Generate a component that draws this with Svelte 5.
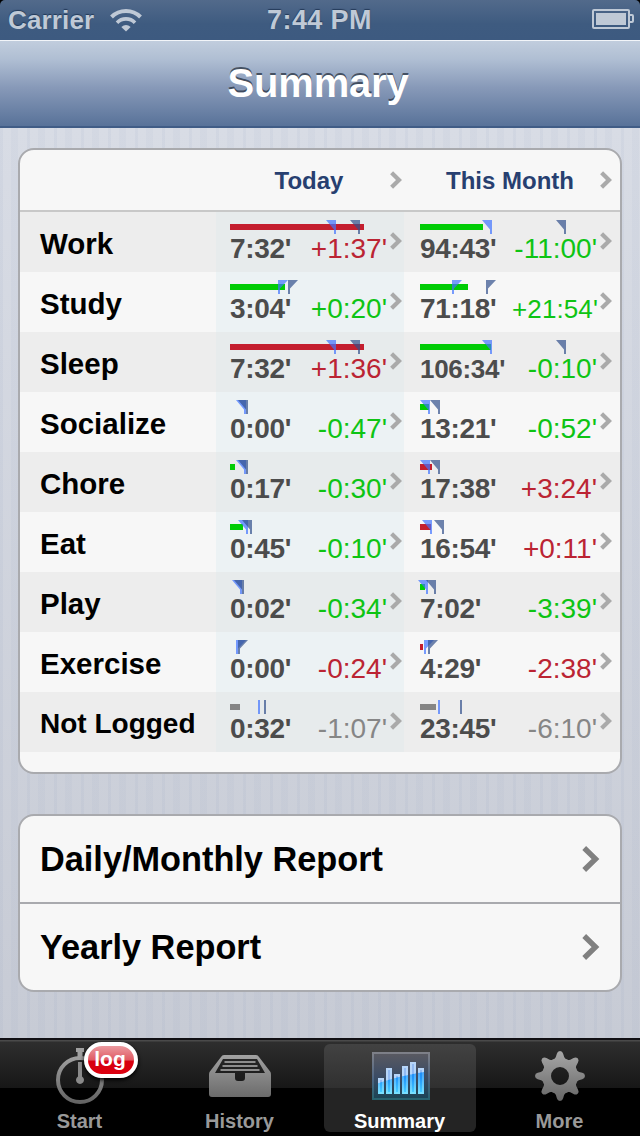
<script lang="ts">
	type Tone = 'good' | 'bad' | 'none';
	type Flag = 'left' | 'right' | 'pole';
	type Cell = {
		time: string;
		diff: string;
		tone: Tone;
		bar: number;
		flag: Flag;
		// x of the two goal markers, from the start of the bar
		marks: [number, number];
	};

	const cell = (
		time: string,
		diff: string,
		tone: Tone,
		bar: number,
		flag: Flag,
		marks: [number, number]
	): Cell => ({ time, diff, tone, bar, flag, marks });

	const rows: { name: string; cells: Cell[] }[] = [
		{
			name: 'Work',
			cells: [
				cell("7:32'", "+1:37'", 'bad', 134, 'left', [106, 130]),
				cell("94:43'", "-11:00'", 'good', 63, 'left', [72, 146])
			]
		},
		{
			name: 'Study',
			cells: [
				cell("3:04'", "+0:20'", 'good', 55, 'right', [48, 58]),
				cell("71:18'", "+21:54'", 'good', 48, 'right', [32, 66])
			]
		},
		{
			name: 'Sleep',
			cells: [
				cell("7:32'", "+1:36'", 'bad', 134, 'left', [106, 130]),
				cell("106:34'", "-0:10'", 'good', 71, 'left', [72, 146])
			]
		},
		{
			name: 'Socialize',
			cells: [
				cell("0:00'", "-0:47'", 'good', 0, 'left', [16, 18]),
				cell("13:21'", "-0:52'", 'good', 9, 'left', [10, 20])
			]
		},
		{
			name: 'Chore',
			cells: [
				cell("0:17'", "-0:30'", 'good', 5, 'left', [16, 18]),
				cell("17:38'", "+3:24'", 'bad', 12, 'left', [10, 20])
			]
		},
		{
			name: 'Eat',
			cells: [
				cell("0:45'", "-0:10'", 'good', 13, 'left', [18, 22]),
				cell("16:54'", "+0:11'", 'bad', 11, 'left', [12, 24])
			]
		},
		{
			name: 'Play',
			cells: [
				cell("0:02'", "-0:34'", 'good', 0, 'left', [12, 14]),
				cell("7:02'", "-3:39'", 'good', 5, 'left', [8, 16])
			]
		},
		{
			name: 'Exercise',
			cells: [
				cell("0:00'", "-0:24'", 'bad', 0, 'right', [6, 8]),
				cell("4:29'", "-2:38'", 'bad', 3, 'right', [4, 8])
			]
		},
		{
			name: 'Not Logged',
			cells: [
				cell("0:32'", "-1:07'", 'none', 10, 'pole', [28, 34]),
				cell("23:45'", "-6:10'", 'none', 16, 'pole', [18, 40])
			]
		}
	];

	const reports = ['Daily/Monthly Report', 'Yearly Report'];
	const tabs = ['Start', 'History', 'Summary', 'More'];
	let active = $state('Summary');

	const chart = [
		[6, 26],
		[14, 16],
		[22, 22],
		[30, 14],
		[38, 10],
		[46, 16]
	];

	function flagPath(flag: Flag, x: number) {
		if (flag === 'left') return `M${x - 10} 0H${x}V14H${x - 2}V9.5Z`;
		if (flag === 'right') return `M${x} 0H${x + 10}L${x + 2} 8.5V14H${x}Z`;
		return `M${x} 0h2v14h-2Z`;
	}

	// eight tapered teeth around the gear's ring
	const teeth = Array.from({ length: 8 }, (_, i) => {
		const a = (i * Math.PI) / 4;
		const at = (r: number, d: number) =>
			`${(30 + r * Math.sin(a + d)).toFixed(2)} ${(32 - r * Math.cos(a + d)).toFixed(2)}`;
		return `M${at(17, -0.38)}Q${at(19, -0.2)} ${at(22.5, -0.14)}Q${at(25, -0.1)} ${at(25, 0)}Q${at(25, 0.1)} ${at(22.5, 0.14)}Q${at(19, 0.2)} ${at(17, 0.38)}Z`;
	}).join('');
</script>

{#snippet chevron()}
	<svg class="chevron" width="12" height="18" viewBox="0 0 12 18">
		<path d="M1.6 1.8L9 9L1.6 16.2" fill="none" stroke="currentColor" stroke-width="4.2" />
	</svg>
{/snippet}

<div class="screen">
	<header class="status">
		<div class="status__side">
			<span class="status__carrier">Carrier</span>
			<svg width="32" height="24" viewBox="0 0 32 24" fill="none" stroke="currentColor" stroke-width="4">
				<path d="M1.5 9A20.5 20.5 0 0 1 30.5 9" />
				<path d="M7 14.7A12.6 12.6 0 0 1 25 14.7" stroke-width="3.6" />
				<path d="M11.3 19.1Q16 14.7 20.7 19.1L16 23.6Z" fill="currentColor" stroke="none" />
			</svg>
		</div>
		<span class="status__time">7:44 PM</span>
		<div class="status__side status__side--end">
			<svg width="42" height="20" viewBox="0 0 42 20">
				<rect x="1" y="1" width="36" height="18" rx="1" fill="none" stroke="currentColor" stroke-width="2" />
				<rect x="4" y="4" width="30" height="12" fill="currentColor" />
				<path d="M38 6H40Q41 6 41 7V12Q41 13 40 13H38" fill="none" stroke="currentColor" stroke-width="2" />
			</svg>
		</div>
	</header>

	<nav class="navbar"><h1>Summary</h1></nav>

	<main>
		<section class="card">
			<div class="row row--head">
				<span></span>
				<div class="head"><span>Today</span>{@render chevron()}</div>
				<div class="head head--month"><span>This Month</span>{@render chevron()}</div>
			</div>
			{#each rows as row}
				<div class="row">
					<span class="row__name" class:row__name--long={row.name.length > 9}>{row.name}</span>
					{#each row.cells as c, i}
						<div class="cell" class:cell--today={i === 0} class:cell--month={i === 1}>
							<div class="cell__body">
								<svg class="gauge" width="150" height="14">
									<rect class="bar bar--{c.tone}" y="4" width={c.bar} height="6" />
									<path class="mark" d={flagPath(c.flag, c.marks[0])} />
									<path class="mark mark--goal" d={flagPath(c.flag, c.marks[1])} />
								</svg>
								<div class="figures">
									<b class:small={c.time.length > 6}>{c.time}</b>
									<span class="diff diff--{c.tone}" class:small={c.diff === "+21:54'"}>{c.diff}</span>
								</div>
							</div>
							{@render chevron()}
						</div>
					{/each}
				</div>
			{/each}
		</section>

		<section class="card card--reports">
			{#each reports as report}
				<div class="report">
					<span>{report}</span>
					<svg width="18" height="28" viewBox="0 0 18 28">
						<path d="M2.2 3L13.5 14L2.2 25" fill="none" stroke="currentColor" stroke-width="5.4" />
					</svg>
				</div>
			{/each}
		</section>
	</main>

	<footer class="tabs">
		{#each tabs as tab}
			<button type="button" class="tab" class:tab--active={active === tab} onclick={() => (active = tab)}>
				{#if tab === 'Start'}
					<svg width="60" height="64" viewBox="0 0 60 64">
						<defs>
							<linearGradient id="metal" x1="0" y1="6" x2="0" y2="60" gradientUnits="userSpaceOnUse">
								<stop offset="0" stop-color="#a8a8a8" />
								<stop offset="1" stop-color="#626262" />
							</linearGradient>
						</defs>
						<circle cx="30" cy="36" r="22" fill="none" stroke="url(#metal)" stroke-width="4" />
						<path d="M26 4H34V8H32.5V13H27.5V8H26Z" fill="#a0a0a0" />
						<path d="M28 18H32V32.5A4 4 0 1 1 28 32.5Z" fill="#8a8a8a" />
					</svg>
					<span class="badge">log</span>
				{:else if tab === 'History'}
					<svg width="64" height="64" viewBox="0 0 64 64">
						<path
							fill="url(#metal)"
							fill-rule="evenodd"
							d="M16 11H48Q50 11 51 13L62.5 28Q63 29 63 31V50Q63 53 60 53H4Q1 53 1 50V31Q1 29 1.5 28L13 13Q14 11 16 11ZM15 15L7 29H27V34Q27 37 30 37H34Q37 37 37 34V29H57L49 15Z"
						/>
						<path d="M16.500 18H47.500M14.500 22H49.500M12.500 26H51.500" stroke="#8d8d8d" stroke-width="2" />
					</svg>
				{:else if tab === 'Summary'}
					<svg width="62" height="64" viewBox="-1 0 62 64">
						<defs>
							<linearGradient id="frame" x1="0" y1="0" x2="0" y2="1">
								<stop offset="0" stop-color="#7e8088" />
								<stop offset=".55" stop-color="#4d6482" />
								<stop offset="1" stop-color="#28636f" />
							</linearGradient>
							<linearGradient id="panel" x1="0" y1="0" x2="0" y2="1">
								<stop offset="0" stop-color="#5a5a61" />
								<stop offset=".5" stop-color="#3c4c65" />
								<stop offset="1" stop-color="#1b4455" />
							</linearGradient>
							<linearGradient id="blue" x1="0" y1="18" x2="0" y2="50" gradientUnits="userSpaceOnUse">
								<stop offset="0" stop-color="#1b80f5" />
								<stop offset=".5" stop-color="#2295fa" />
								<stop offset="1" stop-color="#48d2ff" />
							</linearGradient>
							<linearGradient id="edge" x1="0" y1="26" x2="0" y2="50" gradientUnits="userSpaceOnUse">
								<stop offset="0" stop-color="#3d9dfb" />
								<stop offset="1" stop-color="#7ae2ff" />
							</linearGradient>
							<clipPath id="gloss"><path d="M0 0H60V27Q30 31 0 42Z" /></clipPath>
						</defs>
						<rect x="3" y="9" width="56" height="46" fill="url(#panel)" stroke="url(#frame)" stroke-width="2" />
						{#each chart as [x, y]}
							<rect x={x + 3} y={y + 9} width="4" height={40 - y} fill="url(#blue)" stroke="url(#edge)" stroke-width="2" />
						{/each}
						<g clip-path="url(#gloss)">
							{#each chart as [x, y]}
								<rect x={x + 3} y={y + 9} width="4" height={40 - y} fill="#91b9f2" stroke="#b6d5f9" stroke-width="2" />
							{/each}
						</g>
					</svg>
				{:else}
					<svg width="60" height="64" viewBox="0 0 60 64">
						<circle cx="30" cy="32" r="13.5" fill="none" stroke="url(#metal)" stroke-width="9" />
						<path d={teeth} fill="url(#metal)" />
					</svg>
				{/if}
				<span class="tab__label">{tab}</span>
			</button>
		{/each}
	</footer>
</div>

<style>
	:global(body) {
		background: #000;
	}

	.screen {
		width: 640px;
		height: 1136px;
		display: flex;
		flex-direction: column;
		overflow: hidden;
		border-radius: 5px 5px 0 0;
		font-family: 'Liberation Sans', Arial, Helvetica, sans-serif;
	}

	.status {
		box-sizing: border-box;
		height: 40px;
		padding: 0 6px 0 8px;
		display: flex;
		align-items: center;
		color: #bfc9d6;
		font-weight: bold;
		background: linear-gradient(#526a8b, #3e5b80 60%, #3d5a80);
		text-shadow: 0 -1px 1px rgba(20, 40, 70, 0.7);
	}

	.status__side {
		flex: 1;
		display: flex;
		align-items: center;
		gap: 16px;
	}

	.status__side--end {
		justify-content: flex-end;
	}

	.status__side--end svg {
		margin-top: -2px;
	}

	.status__carrier {
		font-size: 26px;
		letter-spacing: 0.15px;
	}

	.status__time {
		margin-right: 3px;
		font-size: 27px;
		letter-spacing: 0.4px;
	}

	.navbar {
		box-sizing: border-box;
		height: 88px;
		display: flex;
		align-items: center;
		justify-content: center;
		border-top: 1px solid #f2f5f9;
		border-bottom: 2px solid #405c86;
		background: linear-gradient(#c1cddd, #afbed3 22%, #8799b8 55%, #587299);
	}

	h1 {
		margin: 0 4px 0 0;
		font-size: 40px;
		letter-spacing: -0.2px;
		color: #fff;
		text-shadow: 0 -2px 0 rgba(40, 50, 65, 0.75);
	}

	main {
		flex: 1;
		padding: 20px 18px 0;
		display: flex;
		flex-direction: column;
		gap: 40px;
		background:
			repeating-linear-gradient(90deg, rgba(120, 140, 180, 0.07) 0 3px, transparent 3px 11px, rgba(120, 140, 180, 0.05) 11px 18px, transparent 18px 27px),
			linear-gradient(#d8dce5, #c7cbd5);
	}

	.card {
		border: 2px solid #a9aaae;
		border-radius: 16px;
		background: #f7f7f7;
		overflow: hidden;
		padding-bottom: 20px;
	}

	.card--reports {
		padding-bottom: 0;
	}

	.row {
		height: 60px;
		display: grid;
		grid-template: 60px / 196px 188px 216px;
	}

	.row--head {
		border-bottom: 2px solid #c8c8c8;
	}

	.row:nth-child(even) {
		background: #ededed;
	}

	.row__name {
		padding: 4px 0 0 20px;
		font-size: 29.5px;
		line-height: 56px;
		font-weight: bold;
		white-space: nowrap;
	}

	.row__name--long {
		font-size: 28px;
	}

	.head {
		display: flex;
		align-items: center;
		padding-right: 2px;
		color: #273f70;
		font-size: 24px;
		font-weight: bold;
	}

	.head span {
		flex: 1;
		text-align: center;
		padding: 2px 0 0 12px;
	}

	.head--month {
		padding-right: 8px;
	}

	.head--month span {
		padding-left: 16px;
	}

	.chevron {
		flex-shrink: 0;
		color: #aaa;
	}

	.cell {
		display: flex;
		align-items: flex-start;
		padding: 0 2px 0 14px;
	}

	.cell--today {
		background: #ecf2f4;
	}

	.row:nth-child(even) .cell--today {
		background: #e7ebec;
	}

	.cell--month {
		padding: 0 8px 0 16px;
	}

	.cell .chevron {
		margin-top: 20px;
	}

	.cell__body {
		flex: 1;
		padding: 8px 3px 0 0;
	}

	.gauge {
		display: block;
		overflow: visible;
	}

	.bar--good { fill: #00cc05; }
	.bar--bad { fill: #c41e2e; }
	.bar--none { fill: #858585; }

	.mark {
		fill: rgba(64, 116, 255, 0.7);
	}

	.mark--goal {
		fill: rgba(50, 80, 140, 0.7);
	}

	.figures {
		display: flex;
		justify-content: space-between;
		align-items: baseline;
		font-size: 28px;
		line-height: 29px;
		white-space: nowrap;
	}

	.figures b {
		color: #4c4c4c;
		letter-spacing: -0.3px;
	}

	.figures .small {
		font-size: 26px;
	}

	.cell--month .diff.small {
		margin-right: -1px;
		letter-spacing: 0.1px;
	}

	.diff--good { color: #0ec414; }
	.diff--bad { color: #bb2433; }
	.diff--none { color: #868686; }

	.report {
		box-sizing: border-box;
		height: 86px;
		padding: 0 20px;
		display: flex;
		align-items: center;
		justify-content: space-between;
		font-size: 34.3px;
		font-weight: bold;
	}

	.report + .report {
		height: 88px;
		border-top: 2px solid #a9aaae;
	}

	.report svg {
		color: #808080;
	}

	.tabs {
		box-sizing: border-box;
		height: 98px;
		padding: 4px 0;
		display: flex;
		border-top: 2px solid #111014;
		background: linear-gradient(#4a4a4a 0 1px, #2e2e2e 2px, #171717 48px, #000 48px);
	}

	.tab {
		position: relative;
		flex: 1;
		margin: 0 4px;
		padding: 0;
		border: none;
		border-radius: 6px;
		background: none;
		color: #999;
		font: bold 20px 'Liberation Sans', Arial, sans-serif;
		display: flex;
		flex-direction: column;
		align-items: center;
	}

	.tab--active {
		color: #fff;
		background: linear-gradient(#424242, #303030 44px, #242424 44px);
	}

	.tab svg {
		flex-shrink: 0;
	}

	.tab__label {
		line-height: 24px;
		margin: 1px 1px 0 0;
	}

	.badge {
		position: absolute;
		left: 80px;
		top: -2px;
		box-sizing: border-box;
		width: 54px;
		height: 36px;
		border: 4px solid #fff;
		border-radius: 18px;
		background: linear-gradient(#eb9a9f, #e05a63 50%, #d6000f 54%, #dc0010);
		box-shadow: 0 2px 4px #000;
		color: #fff;
		font-size: 21px;
		line-height: 26px;
		text-indent: -2px;
	}
</style>
